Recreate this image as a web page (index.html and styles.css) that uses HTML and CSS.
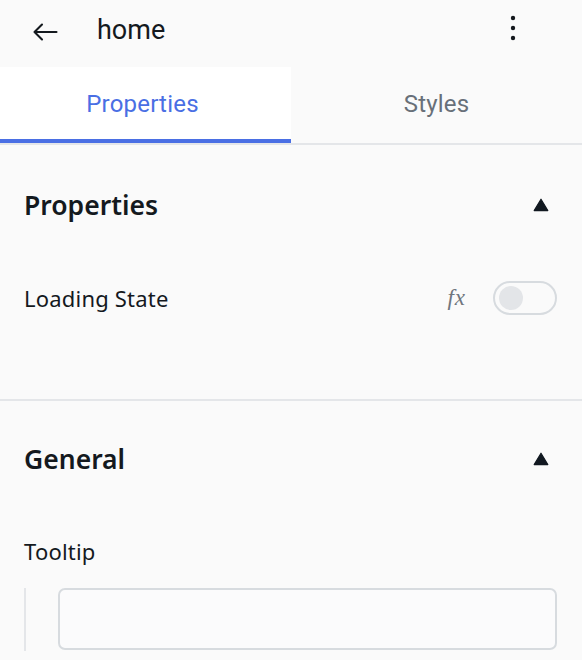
FILE: index.html
```html
<!DOCTYPE html>
<html>
<head>
<meta charset="utf-8">
<link rel="stylesheet" href="styles.css">
</head>
<body>
<div class="app">
  <header class="topbar">
    <svg class="back" width="26" height="24" viewBox="0 0 26 24"><path d="M24.5 12H2.5M10 4.5L2.5 12L10 19.5" fill="none" stroke="#14191e" stroke-width="2.1" stroke-linecap="round" stroke-linejoin="round"/></svg>
    <span class="title">home</span>
    <svg class="kebab" width="8" height="28" viewBox="0 0 8 28"><circle cx="4" cy="4" r="2.2" fill="#14191e"/><circle cx="4" cy="14" r="2.2" fill="#14191e"/><circle cx="4" cy="24" r="2.2" fill="#14191e"/></svg>
  </header>
  <nav class="tabs">
    <div class="tab active"><span class="tab-text">Properties</span></div>
    <div class="tab"><span class="tab-text">Styles</span></div>
  </nav>
  <section class="section first">
    <div class="sec-head">
      <h2>Properties</h2>
      <svg class="tri" width="16" height="14" viewBox="0 0 16 14"><path d="M8 1.2 L14.8 12.6 H1.2 Z" fill="#111820" stroke="#111820" stroke-width="1.2" stroke-linejoin="round"/></svg>
    </div>
    <div class="row">
      <span class="label">Loading State</span>
      <div class="ctrls">
        <span class="fx">fx</span>
        <span class="toggle"><span class="knob"></span></span>
      </div>
    </div>
  </section>
  <section class="section second">
    <div class="sec-head">
      <h2>General</h2>
      <svg class="tri" width="16" height="14" viewBox="0 0 16 14"><path d="M8 1.2 L14.8 12.6 H1.2 Z" fill="#111820" stroke="#111820" stroke-width="1.2" stroke-linejoin="round"/></svg>
    </div>
    <div class="label tooltip-label">Tooltip</div>
    <div class="input-wrap">
      <div class="input"></div>
    </div>
  </section>
</div>
</body>
</html>
```
FILE: styles.css
```css
* { box-sizing: border-box; }
html, body { margin: 0; padding: 0; background: #fafafa; }
body { font-family: "Noto Sans", "Open Sans", sans-serif; color: #14191e; width: 582px; height: 660px; overflow: hidden; }
.app { display: flex; flex-direction: column; }

.topbar { height: 67px; display: flex; align-items: flex-start; padding-left: 32px; padding-right: 65px; }
.back { margin-top: 20px; }
.title { font-family: Roboto, sans-serif; font-size: 27px; line-height: 32px; margin-left: 39px; flex: 1; margin-top: 14px; }
.kebab { margin-top: 14px; }

.tabs { display: flex; height: 78px; border-bottom: 2px solid #e4e6e9; }
.tab { flex: 1 1 0; min-width: 0; display: flex; align-items: center; justify-content: center; font-family: Roboto, sans-serif; font-size: 24px; letter-spacing: 0.2px; color: #687079; padding-bottom: 2px; }
.tab.active { background: #ffffff; color: #4a6fe4; border-bottom: 4px solid #4a6fe4; padding-bottom: 0; padding-top: 2px; }
.tab.active .tab-text { margin-right: 6px; }

.section { padding: 0 25px 0 24px; }
.section.first { padding-top: 40px; padding-bottom: 84px; border-bottom: 2px solid #e4e6e9; }
.section.second { padding-top: 38px; }
.sec-head { height: 40px; display: flex; align-items: center; justify-content: space-between; }
.sec-head h2 { margin: 0; font-size: 26.5px; font-weight: 600; }
.tri { margin-right: 8px; }

.row { margin-top: 56px; height: 34px; display: flex; align-items: center; justify-content: space-between; }
.label { font-size: 22px; letter-spacing: 0.2px; }
.ctrls { display: flex; align-items: center; }
.fx { font-family: "Liberation Serif", serif; font-style: italic; font-size: 23px; color: #6f767e; margin-right: 27px; letter-spacing: 1px; }
.toggle { width: 64px; height: 34px; border: 2px solid #d7dbdf; border-radius: 17px; display: flex; align-items: center; padding-left: 4px; background: #fafafa; }
.knob { width: 24px; height: 24px; border-radius: 50%; background: #e3e5e8; }

.tooltip-label { margin-top: 60px; line-height: 24px; }
.input-wrap { margin-top: 25px; border-left: 2px solid #e4e6e9; padding-left: 32px; height: 63px; }
.input { height: 62px; border: 2px solid #d7dbdf; border-radius: 7px; background: #fbfbfc; }
```
